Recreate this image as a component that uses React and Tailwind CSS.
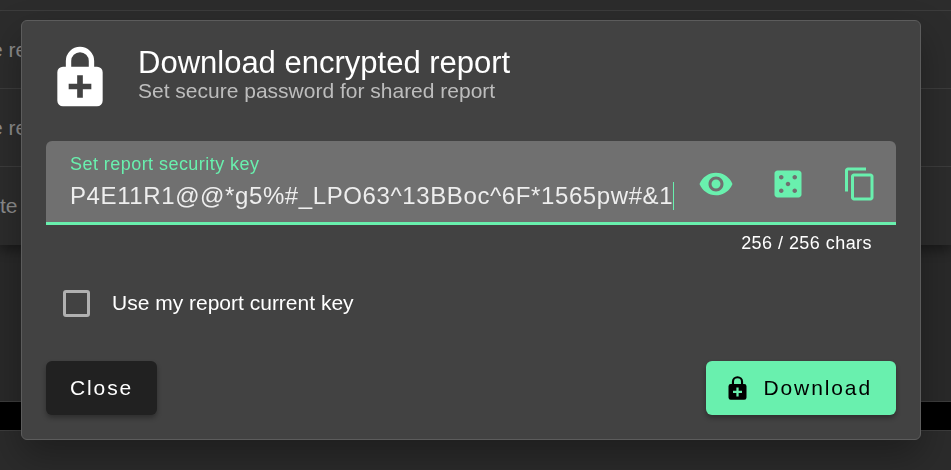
import { useLayoutEffect, useRef } from "react";
import { MdCasino, MdContentCopy, MdVisibility } from "react-icons/md";

function LockPlus({ className }) {
  return (
    <svg viewBox="0 0 24 24" fill="currentColor" className={className} aria-hidden="true">
      <path d="M18 8H17V6A5 5 0 0 0 7 6V8H6A2 2 0 0 0 4 10V20A2 2 0 0 0 6 22H18A2 2 0 0 0 20 20V10A2 2 0 0 0 18 8M8.9 6A3.1 3.1 0 0 1 15.1 6V8H8.9V6M16 16H13V19H11V16H8V14H11V11H13V14H16Z" />
    </svg>
  );
}

function Backdrop() {
  return (
    <div aria-hidden="true" className="flex min-h-screen flex-col bg-[#292929] text-[21px] text-[#8c8c8c]">
      <div className="bg-[#2c2c2c] shadow-[0_6px_10px_rgba(0,0,0,0.35)]">
        <div className="h-[11px] border-b border-[#3c3c3c]" />
        <div className="flex h-[78px] items-center border-b border-[#3c3c3c]">
          <span className="-ml-[9px]">e re</span>
        </div>
        <div className="flex h-[78px] items-center border-b border-[#3c3c3c]">
          <span className="-ml-[9px]">e re</span>
        </div>
        <div className="flex h-[78px] items-center">
          <span>te</span>
        </div>
      </div>
      <div className="h-[156px]" />
      <div className="h-[30px] border-y border-[#3c3c3c] bg-black" />
      <div className="flex-1 bg-[#2b2b2b]" />
    </div>
  );
}

function KeyField() {
  const ref = useRef(null);

  // Keep the end of the key in view.
  useLayoutEffect(() => {
    ref.current.scrollLeft = ref.current.scrollWidth;
  }, []);

  return (
    <div className="flex h-[84px] items-center rounded-t-md border-b-[3px] border-[#69f0ae] bg-[#707070] pt-1 pr-[18px] pl-6">
      <div className="flex min-w-0 flex-1 flex-col">
        <label htmlFor="key" className="text-[18px] leading-6 tracking-wide text-[#69f0ae]">
          Set report security key
        </label>
        <div className="flex h-10 items-center">
          <input
            id="key"
            ref={ref}
            type="text"
            defaultValue="P4E11R1@@*g5%#_LPO63^13BBoc^6F*1565pw#&1"
            className="h-8 min-w-0 flex-1 bg-transparent text-[24px] tracking-wide text-[#eeeeee] caret-transparent outline-none"
          />
          <span className="h-7 w-px bg-[#69f0ae]" />
        </div>
      </div>
      <div className="ml-6 flex gap-9 text-[#69f0ae]">
        <button type="button" aria-label="Show key">
          <MdVisibility className="size-9" />
        </button>
        <button type="button" aria-label="Generate key">
          <MdCasino className="size-9" />
        </button>
        <button type="button" aria-label="Copy key">
          <MdContentCopy className="size-9" />
        </button>
      </div>
    </div>
  );
}

export default function App() {
  return (
    <div className="font-['Liberation_Sans',Arial,sans-serif]">
      <Backdrop />
      <div className="fixed inset-0 pt-5 pr-[30px] pl-[21px]">
        <div
          role="dialog"
          aria-labelledby="title"
          className="rounded-md border border-[#5c5c5c] bg-[#424242] px-6 pt-[23px] pb-6 text-white shadow-[0_16px_36px_rgba(0,0,0,0.3)]"
        >
          <header className="flex items-center gap-6">
            <LockPlus className="size-[68px]" />
            <div className="pb-[3px]">
              <h1 id="title" className="text-[31px] leading-7">Download encrypted report</h1>
              <p className="text-[21px] leading-7 text-[#bdbdbd]">Set secure password for shared report</p>
            </div>
          </header>
          <div className="mt-[29px]">
            <KeyField />
            <p className="mt-1.5 pr-6 text-right text-[18px] leading-6 tracking-wide">256 / 256 chars</p>
          </div>
          <label className="mt-8 ml-[17px] flex w-fit items-center gap-[22px] text-[21px] leading-8">
            <input
              type="checkbox"
              className="size-[27px] appearance-none rounded-[3px] border-3 border-[#b0b0b0]"
            />
            Use my report current key
          </label>
          <footer className="mt-[42px] flex items-center justify-between text-[21px] tracking-[0.09em]">
            <button type="button" className="h-[54px] rounded-md bg-[#212121] px-6 shadow-[0_3px_5px_rgba(0,0,0,0.3)]">
              Close
            </button>
            <button
              type="button"
              className="flex h-[54px] items-center gap-3 rounded-md bg-[#69f0ae] pr-6 pl-[18px] text-black shadow-[0_3px_5px_rgba(0,0,0,0.3)]"
            >
              <LockPlus className="size-[27px]" />
              Download
            </button>
          </footer>
        </div>
      </div>
    </div>
  );
}
